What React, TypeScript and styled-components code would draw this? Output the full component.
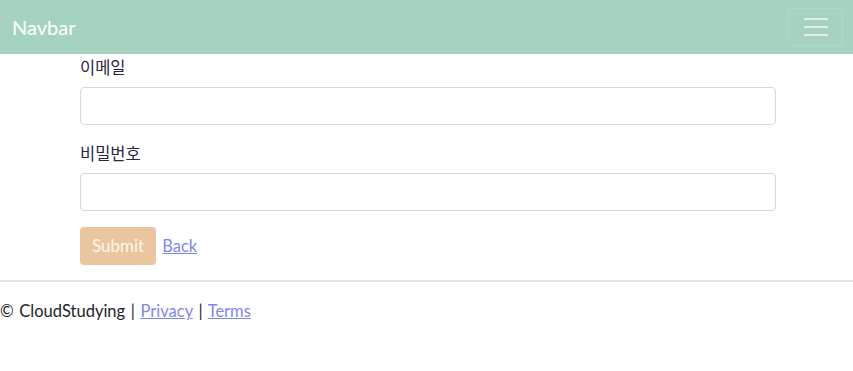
import React from "react";
import styled, { createGlobalStyle } from "styled-components";

const Global = createGlobalStyle`
  html, body { margin: 0; padding: 0; background: #fff; }
  body {
    font-family: Lato, "Noto Sans CJK KR", sans-serif;
    font-size: 16.5px;
    line-height: 24px;
    color: #212529;
  }
  * { box-sizing: border-box; }
`;

const Nav = styled.nav`
  display: flex;
  align-items: center;
  justify-content: space-between;
  height: 54px;
  padding: 0 10px 0 12px;
  background: #a5d3c0;
`;

const Brand = styled.a`
  font-size: 20px;
  line-height: 30px;
  color: #fff;
  text-decoration: none;
`;

const Toggler = styled.button`
  width: 55px;
  height: 38px;
  padding: 0;
  border: 1px solid rgba(255, 255, 255, 0.12);
  border-radius: 4px;
  background: transparent;
  display: flex;
  align-items: center;
  justify-content: center;
`;

const Main = styled.main`
  padding: 1px 77px 0 80px;
`;

const Form = styled.form`
  display: flex;
  flex-direction: column;
  width: 696px;
`;

const Field = styled.div`
  display: flex;
  flex-direction: column;
  gap: 8px;
  margin-bottom: 16px;
`;

const Label = styled.label`
  font-family: "Noto Sans CJK KR", Lato, sans-serif;
  font-size: 16.5px;
  line-height: 24px;
  color: #2a2540;
`;

const Input = styled.input`
  height: 38px;
  border: 1px solid #d7d7dc;
  border-radius: 4px;
  padding: 6px 12px;
  font: inherit;
  outline: none;
`;

const Actions = styled.div`
  display: flex;
  align-items: center;
  gap: 6px;
`;

const SubmitButton = styled.button`
  height: 38px;
  padding: 0 12px 2px;
  border: none;
  border-radius: 4px;
  background: #ebc59d;
  color: #fdf6ee;
  font-family: Lato, sans-serif;
  font-size: 17px;
`;

const TextLink = styled.a`
  color: #7f86f2;
  text-decoration: underline;
`;

const Rule = styled.hr`
  margin: 15px 0 16px;
  border: 0;
  border-top: 2px solid #e2e2e2;
`;

const Footer = styled.footer`
  white-space: pre;
  padding-top: 1px;
  word-spacing: 1.4px;
`;

export default function App() {
  return (
    <>
      <Global />
      <Nav>
        <Brand href="#">Navbar</Brand>
        <Toggler type="button" aria-label="menu">
          <svg width="26" height="22" viewBox="0 0 26 22">
            <g stroke="rgba(255,255,255,0.6)" strokeWidth="2">
              <line x1="1" y1="3" x2="25" y2="3" />
              <line x1="1" y1="11" x2="25" y2="11" />
              <line x1="1" y1="19" x2="25" y2="19" />
            </g>
          </svg>
        </Toggler>
      </Nav>
      <Main>
        <Form onSubmit={(e) => e.preventDefault()}>
          <Field>
            <Label>이메일</Label>
            <Input type="email" />
          </Field>
          <Field>
            <Label>비밀번호</Label>
            <Input type="password" />
          </Field>
          <Actions>
            <SubmitButton type="submit">Submit</SubmitButton>
            <TextLink href="#">Back</TextLink>
          </Actions>
        </Form>
      </Main>
      <Rule />
      <Footer>
        {"© CloudStudying | "}
        <TextLink href="#">Privacy</TextLink>
        {" | "}
        <TextLink href="#">Terms</TextLink>
      </Footer>
    </>
  );
}
